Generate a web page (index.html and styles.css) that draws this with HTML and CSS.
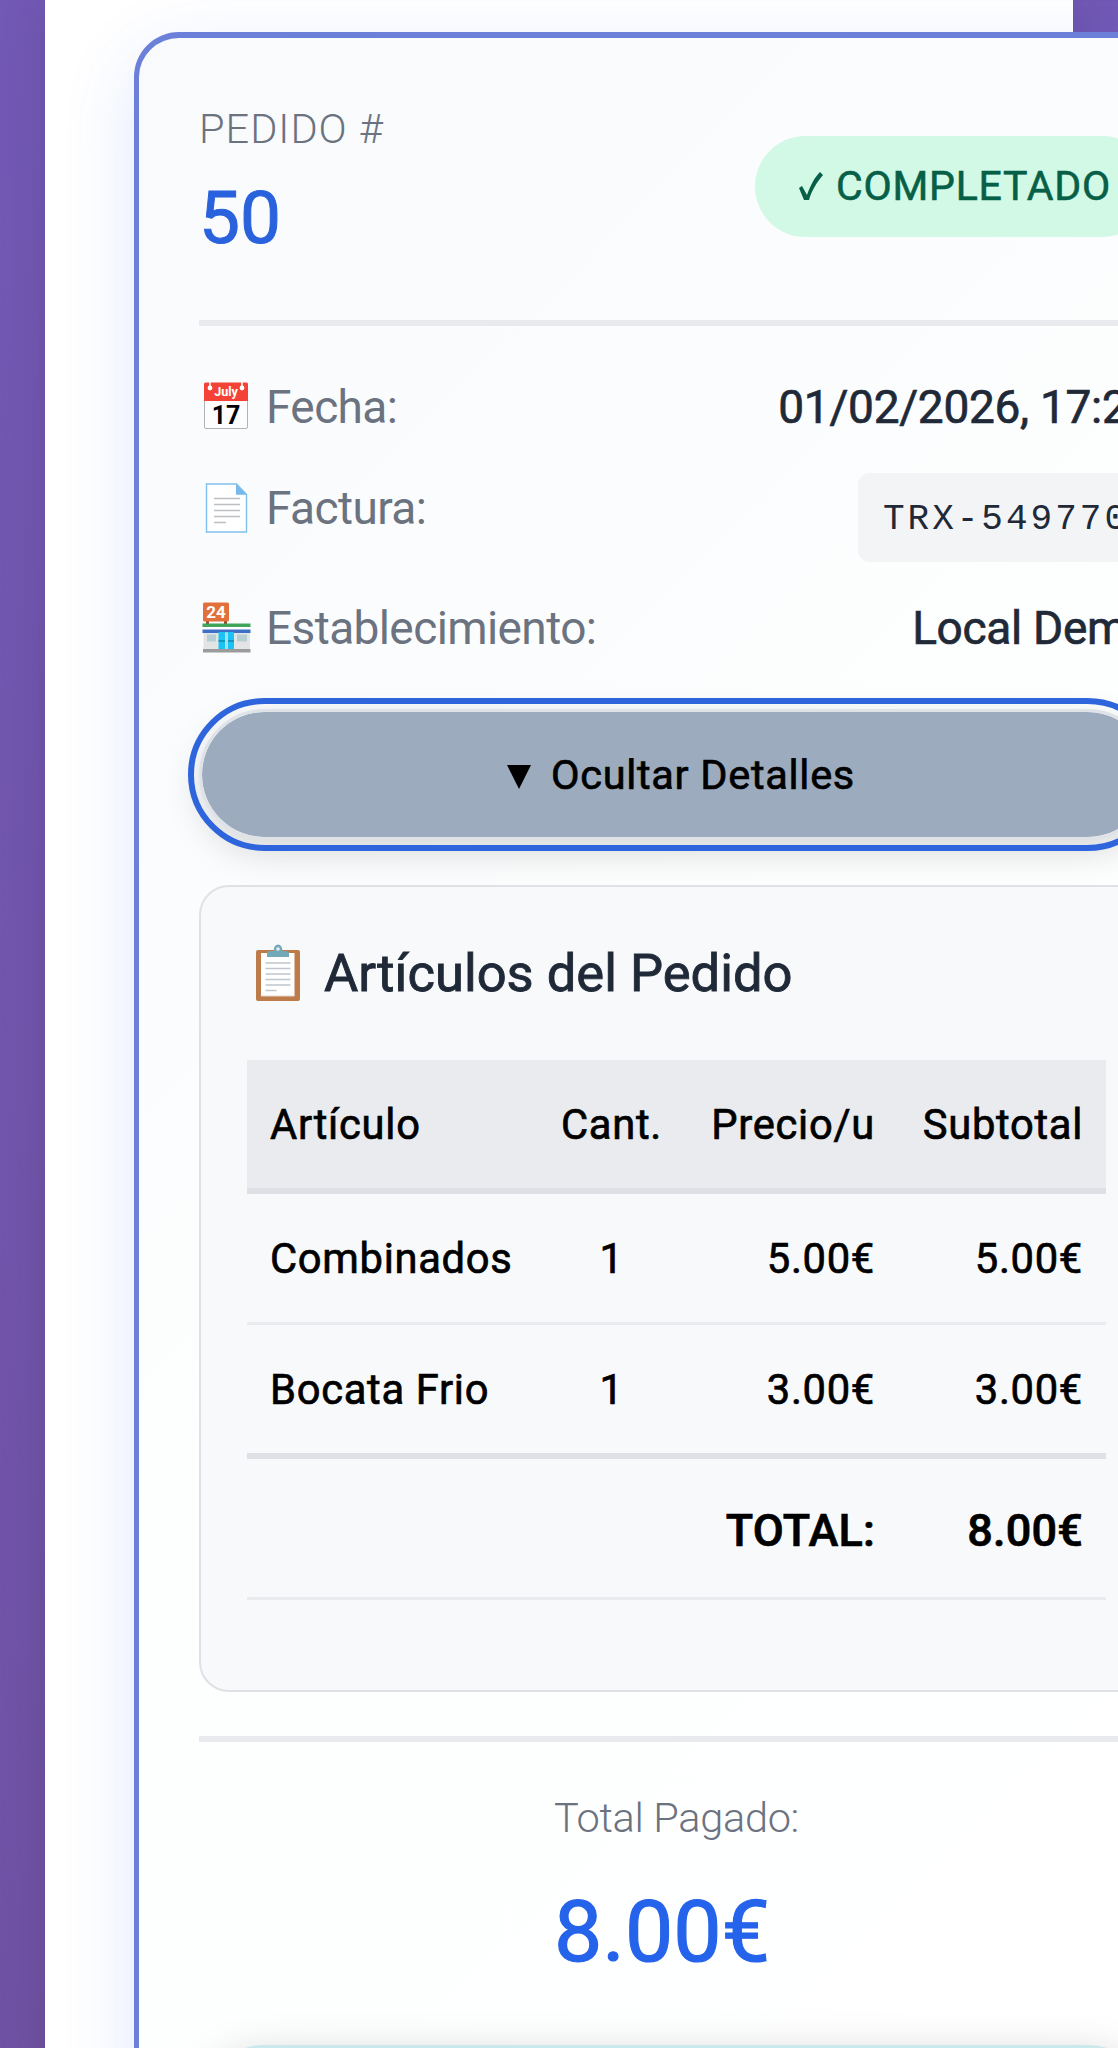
FILE: index.html
```html
<!DOCTYPE html>
<html lang="es">
<head>
    <meta charset="UTF-8">
    <meta name="viewport" content="width=device-width, initial-scale=1.0">
    <title>Pedido 50</title>
    <link rel="stylesheet" href="styles.css">
</head>
<body>
    <div class="container">
        <div class="order-card">
            <div class="order-header">
                <div>
                    <div class="order-label">PEDIDO #</div>
                    <div class="order-number">50</div>
                </div>
                <div class="status-badge">
                    <svg class="check" viewBox="0 0 26 32"><path d="M2 18 L5 16 L10 25 C14 14 18 7 23 2 L26 5 C20 12 15 20 12 30 L7 30 Z" fill="currentColor"/></svg>
                    <span>COMPLETADO</span>
                </div>
            </div>

            <div class="order-info">
                <div class="info-row">
                    <span class="info-label">
                        <svg class="icon" viewBox="0 0 54 54">
                            <rect x="5.5" y="5" width="43" height="44.5" rx="1.5" fill="#fdfdfd" stroke="#b0b4b6"/>
                            <path d="M5 22V5q0-1.500 1.500-1.500h41q1.500 0 1.500 1.500v17z" fill="#f44336"/>
                            <path d="M11 3v5M43 3v5" stroke="#fff" stroke-width="1.500"/>
                            <circle cx="11" cy="9" r="2.400" fill="#fff"/>
                            <circle cx="43" cy="9" r="2.400" fill="#fff"/>
                            <text x="27" y="17" class="cal-month">July</text>
                            <text x="27" y="45" class="cal-day">17</text>
                        </svg>
                        Fecha:
                    </span>
                    <span class="info-value">01/02/2026, 17:20</span>
                </div>
                <div class="info-row">
                    <span class="info-label">
                        <svg class="icon" viewBox="0 0 54 54">
                            <path d="M7.500 4h30l10 10.500v37.500h-40z" fill="#fff" stroke="#7fbfec" stroke-width="1.400"/>
                            <path d="M37 4l11 10.800h-11z" fill="#78b9eb"/>
                            <path d="M15 18.500h26M15 24.500h26M15 30.500h26M15 36.500h26M15 42.500h12" stroke="#bcc0c3" stroke-width="1.500"/>
                        </svg>
                        Factura:
                    </span>
                    <span class="info-value invoice">TRX-549770</span>
                </div>
                <div class="info-row">
                    <span class="info-label">
                        <svg class="icon" viewBox="0 0 54 54">
                            <path d="M7 20h3v4h-3zM25 20h3v4h-3z" fill="#8a4a32"/>
                            <rect x="4" y="2.500" width="26" height="19" rx="1.500" fill="#e2703a"/>
                            <text x="17" y="18" class="shop-sign">24</text>
                            <rect x="4.500" y="32" width="46.500" height="17" fill="#e3e4e5"/>
                            <rect x="3.500" y="23.500" width="48" height="3.500" fill="#43a55a"/>
                            <rect x="3.500" y="27" width="48" height="2.500" fill="#fff"/>
                            <rect x="3.500" y="29.500" width="48" height="3.500" fill="#3f6fc6"/>
                            <rect x="8" y="34.500" width="9" height="7" fill="#b5cfd3"/>
                            <rect x="38" y="34.500" width="10" height="7" fill="#b5cfd3"/>
                            <path d="M19.500 32h6.500v17h-6.500zM29 32h6v17h-6z" fill="#19c4f5"/>
                            <path d="M27.500 32v17" stroke="#9fdcee" stroke-width="2.500"/>
                            <path d="M19.500 41h6.500M29 41h6" stroke="#1687a5" stroke-width="1.500"/>
                            <rect x="4" y="49" width="47.500" height="3.500" fill="#9b9b9b"/>
                        </svg>
                        Establecimiento:
                    </span>
                    <span class="info-value">Local Demo</span>
                </div>
            </div>

            <button type="button" class="toggle-btn"><span class="arrow"></span>Ocultar Detalles</button>

            <div class="details">
                <h3 class="details-title">
                    <svg class="icon-clip" viewBox="0 0 44 58">
                        <rect x="0" y="6" width="44" height="51" rx="2" fill="#bd7b49"/>
                        <rect x="5" y="9" width="33.500" height="43" fill="#fff"/>
                        <path d="M5 52h33.500" stroke="#e4d5c9"/>
                        <path d="M9.500 19h25M9.500 24.500h25M9.500 30h25M9.500 35.500h25M9.500 41h25M9.500 46.500h11" stroke="#c0c6cc" stroke-width="1.600"/>
                        <path d="M11 13V9.500q0-2.500 3-2.500h3.500q.5-6.500 4.500-6.500t4.500 6.500h3.500q3 0 3 2.500v3.500z" fill="#72a8b7"/>
                        <circle cx="22" cy="5" r="1.800" fill="#e8f1f3"/>
                    </svg>
                    Artículos del Pedido
                </h3>
                <table class="items">
                    <thead>
                        <tr>
                            <th class="col-item">Artículo</th>
                            <th class="col-qty">Cant.</th>
                            <th class="col-price">Precio/u</th>
                            <th class="col-subtotal">Subtotal</th>
                        </tr>
                    </thead>
                    <tbody>
                        <tr>
                            <td>Combinados</td>
                            <td class="col-qty">1</td>
                            <td class="col-price">5.00€</td>
                            <td class="col-subtotal">5.00€</td>
                        </tr>
                        <tr>
                            <td>Bocata Frio</td>
                            <td class="col-qty">1</td>
                            <td class="col-price">3.00€</td>
                            <td class="col-subtotal">3.00€</td>
                        </tr>
                    </tbody>
                    <tfoot>
                        <tr>
                            <td colspan="3" class="col-price">TOTAL:</td>
                            <td class="col-subtotal">8.00€</td>
                        </tr>
                    </tfoot>
                </table>
            </div>

            <div class="order-total">
                <div>
                    <div class="total-label">Total Pagado:</div>
                    <div class="total-amount">8.00€</div>
                </div>
            </div>

            <div class="action-btn"></div>
        </div>
    </div>
</body>
</html>
```

FILE: styles.css
```css
* {
    box-sizing: border-box;
    margin: 0;
    padding: 0;
}
html {
    overflow: hidden;
}
body {
    height: 2048px;
    overflow: hidden;
    font-family: Roboto, sans-serif;
    background: linear-gradient(180deg, #7359b6 0%, #7052a4 100%);
}
.container {
    width: 1028px;
    height: 2300px;
    margin-left: 45px;
    padding: 32px 0 0 89px;
    background: #fff;
    box-shadow: 0 0 45px rgba(0, 0, 0, 0.12);
}
.order-card {
    width: 1084px;
    height: 2200px;
    padding: 60px;
    border: 5px solid #6c80da;
    border-top-width: 6px;
    border-radius: 45px;
    background: linear-gradient(135deg, #f8fafc 0%, #fdfefe 45%, #fff 100%);
    box-shadow: 0 24px 72px rgba(37, 99, 235, 0.15);
}
.order-header {
    display: flex;
    justify-content: space-between;
    align-items: center;
    height: 228px;
    padding-bottom: 44px;
    border-bottom: 6px solid #e9eaee;
}
.order-label {
    font-size: 41.5px;
    font-weight: 300;
    line-height: 62px;
    letter-spacing: 1px;
    color: #6b7280;
}
.order-number {
    font-size: 73px;
    font-weight: 400;
    line-height: 116px;
    color: #2962dc;
    -webkit-text-stroke: 1px;
}
.status-badge {
    display: flex;
    align-items: center;
    gap: 13px;
    height: 101px;
    margin-bottom: 2px;
    padding: 0 42px;
    border-radius: 51px;
    background: #d1f9e5;
    color: #065f46;
    font-size: 41px;
    font-weight: 400;
    letter-spacing: 0.8px;
    -webkit-text-stroke: 0.6px;
}
.check {
    width: 26px;
    height: 32px;
}

.order-info {
    display: flex;
    flex-direction: column;
    gap: 31px;
    padding-top: 46px;
}
.info-row {
    display: flex;
    justify-content: space-between;
    font-size: 46px;
    line-height: 70px;
}
.info-label {
    display: flex;
    align-items: center;
    gap: 13px;
    height: 70px;
    color: #6b7280;
    letter-spacing: -0.6px;
}
.icon {
    width: 54px;
    height: 54px;
    margin-top: -2px;
}
.cal-month, .cal-day, .shop-sign {
    font-weight: 700;
    text-anchor: middle;
    letter-spacing: 0;
}
.cal-month {
    font-size: 12.5px;
    fill: #fff;
}
.cal-day {
    font-size: 25px;
    fill: #000;
}
.shop-sign {
    font-size: 17px;
    fill: #fff;
}
.info-value {
    color: #1f2937;
    letter-spacing: -0.3px;
    -webkit-text-stroke: 0.7px;
}
.invoice {
    height: 89px;
    padding: 2px 24px 0 25px;
    border-radius: 12px;
    background: #f3f4f6;
    font-family: "Liberation Mono", monospace;
    font-size: 36px;
    line-height: 89px;
    letter-spacing: 3px;
    -webkit-text-stroke: 0;
}

.toggle-btn {
    display: flex;
    justify-content: center;
    align-items: center;
    width: 100%;
    height: 131px;
    margin: 46px 0 45px;
    padding-left: 10px;
    border: 3px solid #dfe3e8;
    border-radius: 66px;
    background: #9cacbe;
    background-clip: padding-box;
    outline: 6px solid #2f65dc;
    outline-offset: 5px;
    box-shadow: 0 12px 36px rgba(0, 0, 0, 0.15);
    color: #000;
    font-family: inherit;
    font-size: 41.5px;
    font-weight: 400;
    letter-spacing: 0.7px;
    -webkit-text-stroke: 0.7px;
}
.arrow {
    margin: 5px 20px 0 0;
    border: 12.5px solid transparent;
    border-top: 24px solid #000;
    border-bottom: 0;
}

.details {
    height: 807px;
    padding: 45px 45px 45px 46px;
    border: 2px solid #dfe1e5;
    border-radius: 30px;
    background: #f8f9fb;
}
.details-title {
    display: flex;
    align-items: center;
    gap: 24px;
    height: 82px;
    margin-bottom: 46px;
    padding-left: 9px;
    font-size: 52.5px;
    font-weight: 400;
    color: #1f2937;
    -webkit-text-stroke: 0.9px;
}
.icon-clip {
    width: 44px;
    height: 58px;
}
.items {
    width: 859px;
    border-spacing: 0;
    table-layout: fixed;
    font-size: 41.7px;
    letter-spacing: 0.7px;
    color: #000;
    -webkit-text-stroke: 0.7px;
}
.items th {
    height: 134px;
    border-bottom: 6px solid #dfe0e6;
    background: #eaebee;
    font-weight: 400;
}
.items td {
    height: 131px;
    border-bottom: 3px solid #e9ebee;
}
.items th, .items td {
    padding: 0 23px;
    text-align: left;
}
.items .col-item {
    width: 290px;
}
.items .col-qty {
    width: 149px;
    text-align: center;
}
.items .col-price {
    text-align: right;
}
.items th.col-price {
    width: 212px;
}
.items .col-subtotal {
    text-align: right;
}
.items tbody tr:last-child td {
    height: 134px;
    border-bottom: 6px solid #dfe0e6;
}
.items tfoot td {
    height: 141px;
    padding-top: 5px;
    font-size: 45px;
    font-weight: 500;
    letter-spacing: 0.2px;
}

.order-total {
    display: flex;
    justify-content: center;
    height: 309px;
    margin-top: 44px;
    padding: 45px 0 0 1px;
    border-top: 6px solid #e9eaee;
}
.total-label {
    font-size: 41.5px;
    font-weight: 300;
    line-height: 62px;
    letter-spacing: -0.3px;
    color: #6b7280;
}
.total-amount {
    padding-top: 15px;
    font-size: 86px;
    font-weight: 400;
    line-height: 136px;
    color: #2563eb;
    -webkit-text-stroke: 1.2px;
}
.action-btn {
    height: 130px;
    border-radius: 65px;
    background: #c9e9ed;
    box-shadow: 0 12px 45px rgba(0, 0, 0, 0.2);
}
```
